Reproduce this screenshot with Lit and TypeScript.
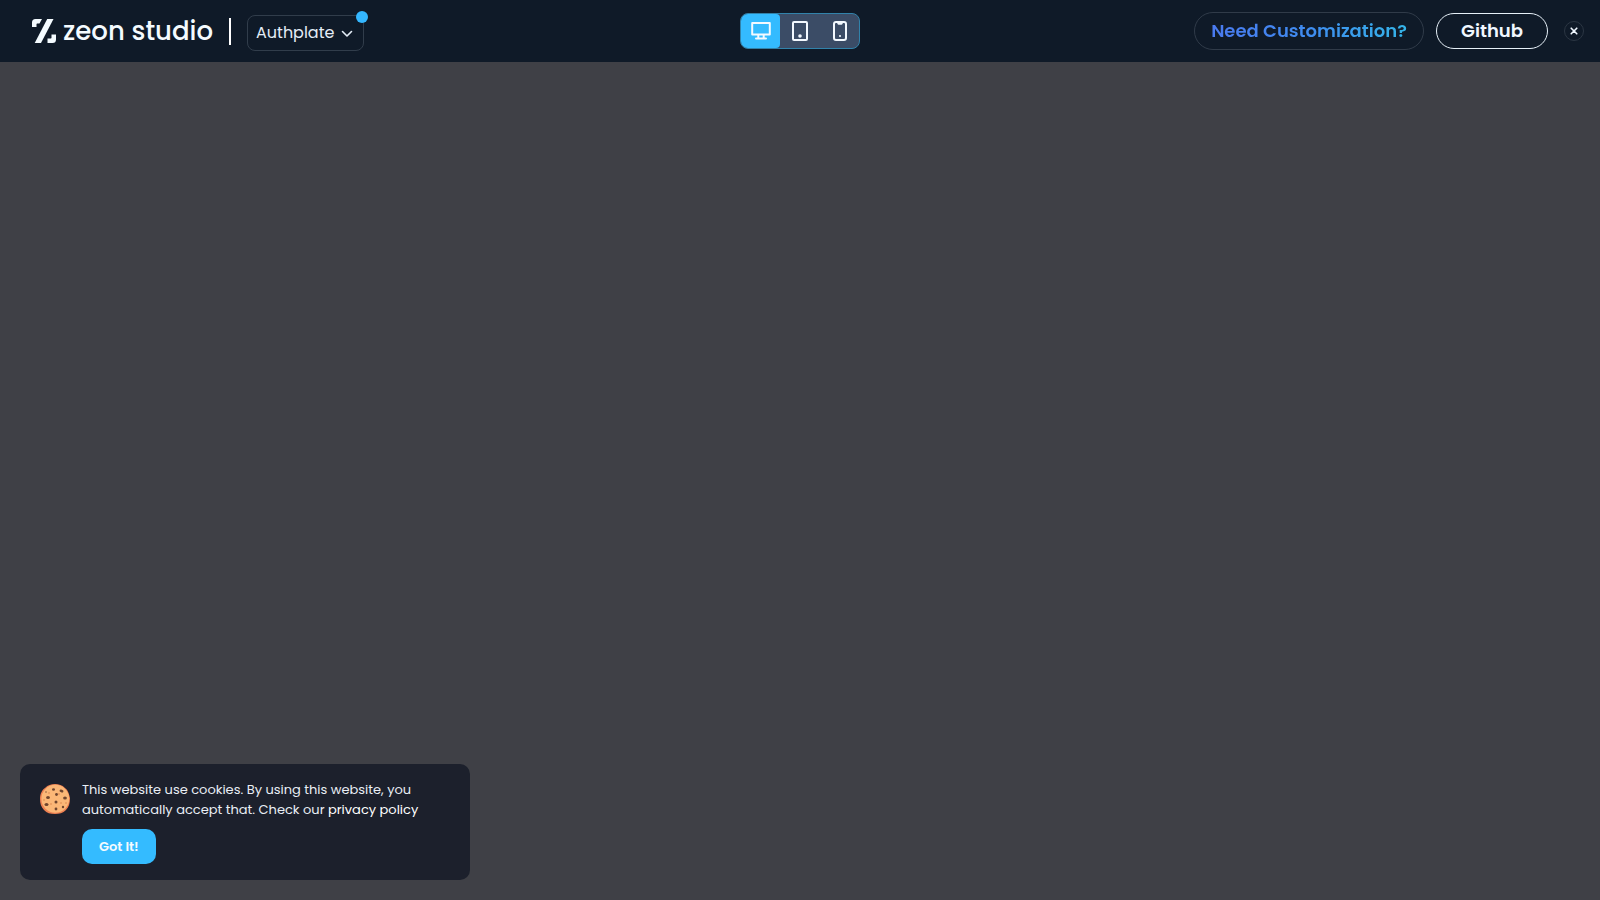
import { LitElement, html, css } from "lit";
import { customElement, state } from "lit/decorators.js";

type Device = "desktop" | "tablet" | "mobile";

const deviceIcons = {
  desktop: html`<svg viewBox="0 0 20 20" width="20" height="20" aria-hidden="true">
    <path d="M1.200 2h17.600v11.500H1.200zM7.300 13.500v4M12.700 13.500v4M5 17.500h10" />
  </svg>`,
  tablet: html`<svg viewBox="0 0 20 20" width="20" height="20" aria-hidden="true">
    <rect x="3" y="1" width="14" height="18" rx="1" />
    <circle class="solid" cx="10" cy="15" r="1.8" />
  </svg>`,
  mobile: html`<svg viewBox="0 0 20 20" width="20" height="20" aria-hidden="true">
    <rect x="4" y="1" width="12" height="18" rx="2" />
    <path d="M8 1.500l.5 1.200h3l.5-1.200" />
    <circle class="solid" cx="10" cy="15" r="1.100" />
  </svg>`,
};

@customElement("preview-header")
export class PreviewHeader extends LitElement {
  @state() private device: Device = "desktop";

  static styles = css`
    :host {
      display: block;
      background: #0f1a28;
    }
    .bar {
      display: grid;
      grid-template-columns: 1fr auto 1fr;
      align-items: center;
      height: 62px;
      padding: 0 16px;
    }
    .left,
    .right {
      display: flex;
      align-items: center;
    }
    .left {
      gap: 16px;
      padding-left: 16px;
    }
    .right {
      justify-content: flex-end;
      gap: 16px;
    }
    .brand {
      display: flex;
      align-items: center;
      gap: 7px;
      color: #f4fbff;
      font-size: 26px;
      line-height: 28px;
      font-weight: 500;
      text-decoration: none;
      white-space: nowrap;
    }
    .brand svg {
      fill: currentColor;
    }
    .divider {
      width: 2px;
      height: 27px;
      background: #fff;
    }
    .picker {
      position: relative;
      padding-top: 4px;
    }
    .select {
      display: flex;
      align-items: center;
      justify-content: space-between;
      width: 117px;
      height: 36px;
      padding: 0 9px 0 8px;
      border: 1px solid #313d4b;
      border-radius: 8px;
      background: transparent;
      color: #e4edf7;
      font: 400 16px/24px var(--font);
    }
    .select svg,
    .close svg {
      fill: none;
      stroke: currentColor;
      stroke-width: 1.6;
      stroke-linecap: round;
      stroke-linejoin: round;
    }
    .dot {
      position: absolute;
      top: 0;
      right: -4px;
      width: 12px;
      height: 12px;
      border-radius: 50%;
      background: #34b7ff;
    }
    .devices {
      display: flex;
      box-sizing: border-box;
      height: 36px;
      border: 1px solid #3182aa;
      border-radius: 8px;
      background: #3b4c66;
      overflow: hidden;
    }
    .device {
      display: grid;
      place-items: center;
      width: 40px;
      padding: 0;
      border: 0;
      background: transparent;
    }
    .device svg {
      fill: none;
      stroke: #f3f9ff;
      stroke-width: 2;
      stroke-linejoin: round;
      stroke-linecap: round;
    }
    .device .solid {
      fill: #f3f9ff;
      stroke: none;
    }
    .device.active {
      border-radius: 0 4px 4px 0;
      background: #34bbff;
    }
    .devices .device:first-child {
      width: 39px;
    }
    .devices .device:last-child {
      width: 39px;
    }
    .actions {
      display: flex;
      align-items: center;
      gap: 12px;
    }
    .pill {
      display: flex;
      align-items: center;
      justify-content: center;
      box-sizing: border-box;
      border: 1px solid #303b49;
      border-radius: 20px;
      font-size: 18px;
      line-height: 24px;
      font-weight: 600;
      text-decoration: none;
      white-space: nowrap;
    }
    .custom {
      width: 230px;
      height: 38px;
    }
    .custom span {
      background: linear-gradient(90deg, #4a7af0, #3f8cf0 50%, #34b4e8);
      background-clip: text;
      -webkit-background-clip: text;
      color: transparent;
    }
    .github {
      width: 112px;
      height: 36px;
      border-color: #e6f0f8;
      color: #f0f7ff;
    }
    .close {
      display: grid;
      place-items: center;
      box-sizing: border-box;
      width: 20px;
      height: 20px;
      padding: 0;
      border: 1px solid #2b3643;
      border-radius: 50%;
      background: transparent;
      color: #f0f7ff;
    }
  `;

  private deviceButton(name: Device) {
    return html`<button
      class="device ${this.device === name ? "active" : ""}"
      aria-label=${name}
      aria-pressed=${this.device === name}
      @click=${() => (this.device = name)}
    >
      ${deviceIcons[name]}
    </button>`;
  }

  render() {
    return html`<header class="bar">
      <div class="left">
        <a class="brand" href="#">
          <svg viewBox="0 0 24 24" width="24" height="24" aria-hidden="true">
            <path d="M3.500 0H10L7.500 4.500H5.200Q4.500 4.500 4.500 5.200V8H0V3.500Q0 0 3.500 0Z" />
            <path d="M15.200 0H21.500L9 24H2.700Z" />
            <path d="M19.500 15.500H24V20.500Q24 24 20.500 24H15.500V19.500H18.800Q19.500 19.500 19.500 18.800Z" />
          </svg>
          <span>zeon studio</span>
        </a>
        <div class="divider"></div>
        <div class="picker">
          <button class="select" aria-haspopup="listbox">
            Authplate
            <svg viewBox="0 0 14 14" width="14" height="14" aria-hidden="true">
              <path d="M2.500 5.500L7 10l4.500-4.500" />
            </svg>
          </button>
          <span class="dot"></span>
        </div>
      </div>
      <div class="devices" role="group" aria-label="Preview size">
        ${this.deviceButton("desktop")}${this.deviceButton("tablet")}${this.deviceButton("mobile")}
      </div>
      <div class="right">
        <div class="actions">
          <a class="pill custom" href="#"><span>Need Customization?</span></a>
          <a class="pill github" href="#">Github</a>
        </div>
        <button class="close" aria-label="Close">
          <svg viewBox="0 0 8 8" width="8" height="8" aria-hidden="true">
            <path d="M1.200 1.200l5.600 5.600M6.800 1.200L1.200 6.800" />
          </svg>
        </button>
      </div>
    </header>`;
  }
}

@customElement("cookie-notice")
export class CookieNotice extends LitElement {
  @state() private accepted = false;

  static styles = css`
    :host {
      display: block;
    }
    .card {
      display: flex;
      align-items: flex-start;
      gap: 12px;
      box-sizing: border-box;
      padding: 16px 20px;
      border-radius: 10px;
      background: #1c202c;
      color: #e9eef5;
      font-size: 13px;
      line-height: 20px;
    }
    .cookie {
      flex: none;
      padding-top: 4px;
    }
    .text {
      max-width: 348px;
      margin: 0 0 9px;
    }
    .text a {
      color: #fff;
      text-decoration: none;
    }
    .accept {
      display: block;
      height: 35px;
      padding: 0 17px;
      border: 0;
      border-radius: 10px;
      background: #34bbff;
      color: #f5fbff;
      font: 600 13px/20px var(--font);
    }
  `;

  render() {
    if (this.accepted) return html``;
    return html`<section class="card" aria-label="Cookies">
      <svg class="cookie" viewBox="0 0 30 30" width="30" height="30" aria-hidden="true">
        <path
          fill="#ee8052"
          d="M15 0C19 0 22 1 25 4C28 6 29 10 30 14C30 19 29 23 26 26C23 29 19 30 15 30C10 30 7 29 4 26C1 23 0 19 0 15C0 10 2 6 5 4C8 1 11 0 15 0Z"
        />
        <ellipse cx="15.300" cy="14.800" rx="13.900" ry="14" fill="#fbb777" />
        <g fill="#e99a5e">
          <circle cx="9" cy="9" r="1" />
          <circle cx="19" cy="10" r="1" />
          <circle cx="11" cy="20" r="1" />
          <circle cx="21" cy="19" r="1" />
          <circle cx="26" cy="19" r="1" />
          <circle cx="4" cy="16" r="1" />
        </g>
        <g fill="#70452e">
          <ellipse cx="13.500" cy="5.500" rx="1.500" ry="1.200" />
          <ellipse cx="21.500" cy="7" rx="2" ry="1.400" transform="rotate(20 21.500 7)" />
          <circle cx="16.500" cy="10.500" r="1.400" />
          <ellipse cx="8" cy="13.500" rx="1.900" ry="1.600" />
          <ellipse cx="25" cy="14" rx="1.900" ry="1.600" />
          <circle cx="16" cy="18" r="1.500" />
          <ellipse cx="6.500" cy="20.500" rx="2" ry="1.500" />
          <circle cx="23" cy="23" r="1.200" />
          <circle cx="16" cy="25" r="1.400" />
          <circle cx="6" cy="8" r=".7" />
        </g>
      </svg>
      <div>
        <p class="text">
          This website use cookies. By using this website, you automatically accept that. Check our
          <a href="#">privacy policy</a>
        </p>
        <button class="accept" @click=${() => (this.accepted = true)}>Got It!</button>
      </div>
    </section>`;
  }
}

@customElement("app-root")
export class AppRoot extends LitElement {
  static styles = css`
    :host {
      --font: Poppins, Inter, "Open Sans", sans-serif;
      display: flex;
      flex-direction: column;
      min-height: 100vh;
      background: #3f4046;
      font-family: var(--font);
    }
    .preview {
      flex: 1;
      display: flex;
      align-items: flex-end;
      padding: 20px;
    }
    .notice {
      width: 100%;
      max-width: 450px;
    }
  `;

  render() {
    return html`<preview-header></preview-header>
      <main class="preview"><cookie-notice class="notice"></cookie-notice></main>`;
  }
}
